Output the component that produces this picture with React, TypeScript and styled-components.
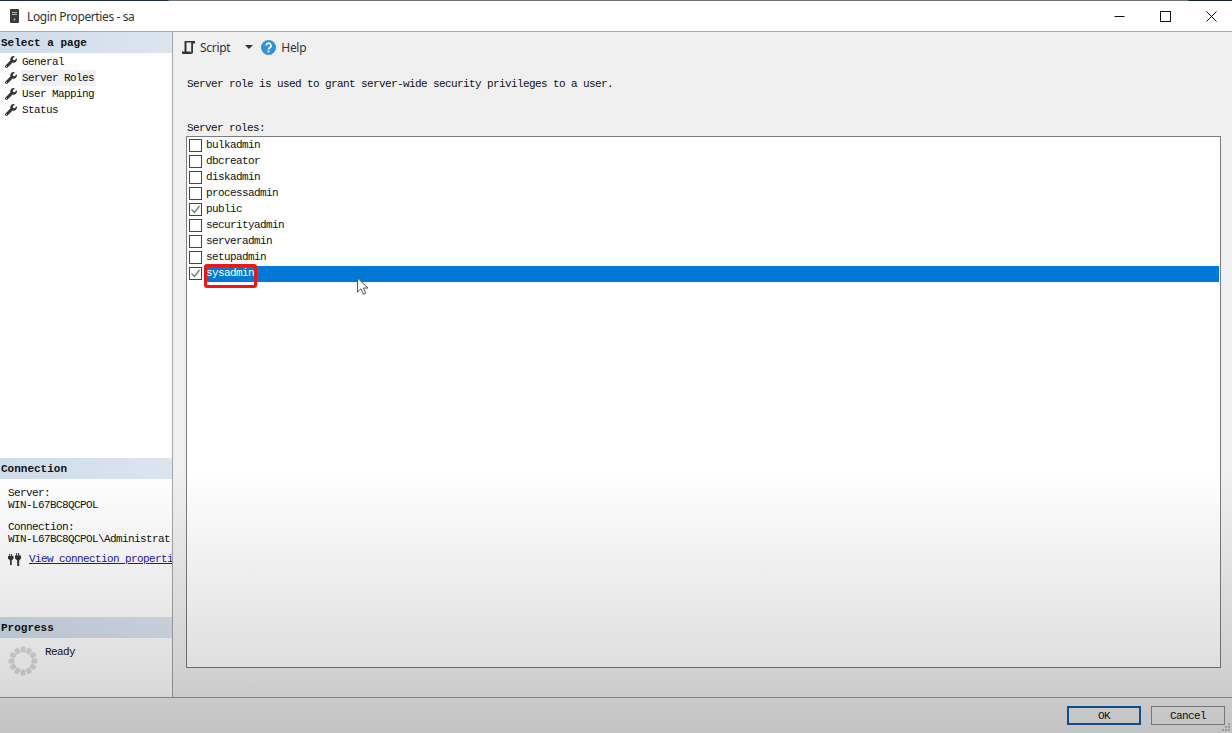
import React from "react";
import styled, { createGlobalStyle } from "styled-components";
import { FaWrench } from "react-icons/fa";

const Global = createGlobalStyle`
  html, body { margin: 0; padding: 0; height: 100%; background: #f0f0f0; overflow: hidden; }
  #root { height: 100%; }
  *, *::before, *::after { box-sizing: border-box; }
`;

const mono = `"Liberation Mono", "DejaVu Sans Mono", monospace`;

const Window = styled.div`
  position: relative;
  width: 1232px;
  height: 733px;
  display: flex;
  flex-direction: column;
  background: #f0f0f0;
  overflow: hidden;
  font-family: ${mono};
  font-size: 11px;
  letter-spacing: -0.6px;
  color: #111;
`;
const TopStrip = styled.div`
  height: 1px;
  flex: none;
  background: linear-gradient(90deg, #1d2a3a 0, #1d2a3a 168px, #6d7378 169px, #6d7378 1188px, #16202c 1189px);
`;
const TitleBar = styled.div`
  height: 31px;
  flex: none;
  display: flex;
  align-items: center;
  background: #fff;
  border-bottom: 1px solid #a9a9a9;
  padding-left: 10px;
  margin-right: -2px;
`;
const TitleText = styled.div`
  font-family: "Noto Sans", "Open Sans", sans-serif;
  font-size: 12px;
  letter-spacing: -0.38px;
  color: #333;
  margin-left: 8px;
  flex: 1;
`;
const WinButton = styled.div`
  width: 46px;
  height: 30px;
  display: flex;
  align-items: center;
  justify-content: center;
`;
const Body = styled.div`
  flex: 1;
  min-height: 0;
  display: flex;
`;
const Sidebar = styled.div`
  width: 173px;
  flex: none;
  display: flex;
  flex-direction: column;
  background: #fff;
  border-right: 1px solid #a5a5a5;
  overflow: hidden;
  white-space: nowrap;
`;
const SectionHead = styled.div`
  height: 21px;
  flex: none;
  display: flex;
  align-items: center;
  font-weight: 700;
  letter-spacing: 0;
  padding-left: 1px;
  background: linear-gradient(90deg, #cfdcea, #dbe5f0);
`;
const PageList = styled.div`
  flex: 1;
  padding-top: 1px;
`;
const PageRow = styled.div`
  height: 16px;
  display: flex;
  align-items: center;
  padding-left: 5px;
  gap: 4px;
  svg { width: 12px; height: 12px; color: #333; flex: none; }
`;
const PageLabel = styled.span<{ $active?: boolean }>`
  padding: 0 2px 0 1px;
  line-height: 16px;
  background: ${(p) => (p.$active ? "#f1f1f1" : "transparent")};
`;
const ConnBody = styled.div`
  height: 138px;
  flex: none;
  display: flex;
  flex-direction: column;
  gap: 10px;
  padding: 8px 0 0 8px;
  line-height: 12px;
`;
const ConnGroup = styled.div``;
const LinkRow = styled.div`
  display: flex;
  align-items: center;
  gap: 8px;
  margin-top: -3px;
  height: 14px;
  svg { flex: none; }
`;
const LinkText = styled.a`
  color: #1a1ab0;
  text-decoration: underline;
`;
const ProgressBody = styled.div`
  height: 59px;
  flex: none;
  display: flex;
  padding: 8px 0 0 8px;
  gap: 7px;
  line-height: 12px;
`;
const Main = styled.div`
  flex: 1;
  min-width: 0;
  display: flex;
  flex-direction: column;
  padding: 0 11px 29px 8px;
  background: #f0f0f0;
`;
const Toolbar = styled.div`
  height: 30px;
  flex: none;
  display: flex;
  align-items: center;
  padding-left: 1px;
  font-family: "Noto Sans", "Open Sans", sans-serif;
  font-size: 12px;
  letter-spacing: -0.3px;
  color: #333;
`;
const ToolLabel = styled.span`
  margin-left: 5px;
`;
const Caret = styled.span`
  width: 0;
  height: 0;
  border-left: 4.5px solid transparent;
  border-right: 4.5px solid transparent;
  border-top: 4.5px solid #333;
  margin: 0 8px 0 15px;
`;
const Description = styled.div`
  margin: 16px 0 0 6px;
  line-height: 12px;
  height: 12px;
`;
const ListTitle = styled.div`
  margin: 32px 0 2px 6px;
  line-height: 12px;
  height: 12px;
`;
const ListBox = styled.div`
  flex: 1;
  margin-left: 5px;
  background: #fff;
  border: 1px solid #7d7d7d;
  padding: 1px 0 0 2px;
  min-height: 0;
`;
const RoleRow = styled.div`
  height: 16px;
  display: flex;
  align-items: center;
  gap: 2px;
  padding-right: 1px;
`;
const Check = styled.span`
  width: 13px;
  height: 13px;
  flex: none;
  margin-top: -1px;
  border: 1px solid #444;
  background: #fff;
  display: flex;
  align-items: center;
  justify-content: center;
`;
const RoleLabel = styled.span<{ $selected?: boolean }>`
  flex: 1;
  height: 16px;
  line-height: 15px;
  padding-left: 2px;
  background: ${(p) => (p.$selected ? "#0078d7" : "transparent")};
  color: ${(p) => (p.$selected ? "#fff" : "#111")};
`;
const Footer = styled.div`
  height: 36px;
  flex: none;
  border-top: 1px solid #9b9b9b;
  background: #f0f0f0;
  display: flex;
  justify-content: flex-end;
  align-items: flex-start;
  gap: 10px;
  padding: 8px 7px 0 0;
`;
const DialogButton = styled.div<{ $primary?: boolean }>`
  width: 74px;
  height: 19px;
  display: flex;
  align-items: center;
  justify-content: center;
  background: #f0f0f0;
  border: ${(p) => (p.$primary ? "2px solid #0f5fa8" : "1px solid #8f8f8f")};
`;
const Fade = styled.div`
  position: absolute;
  left: 0;
  right: 0;
  top: 470px;
  bottom: 0;
  pointer-events: none;
  background: linear-gradient(180deg, rgba(0,0,0,0) 0%, rgba(0,0,0,0.13) 76%, rgba(0,0,0,0.19) 100%);
`;
const RedBox = styled.div`
  position: absolute;
  left: 204px;
  top: 264px;
  width: 53px;
  height: 24px;
  border: 3px solid #f01414;
  border-radius: 3px;
`;
const Pointer = styled.svg`
  position: absolute;
  left: 356px;
  top: 277px;
`;
const Grip = styled.svg`
  position: absolute;
  right: 1px;
  bottom: 1px;
`;

const roles = ["bulkadmin", "dbcreator", "diskadmin", "processadmin", "public", "securityadmin", "serveradmin", "setupadmin", "sysadmin"];
const checked = new Set(["public", "sysadmin"]);
const pages = ["General", "Server Roles", "User Mapping", "Status"];

const Spinner = () => (
  <svg width="30" height="30" viewBox="0 0 30 30">
    {Array.from({ length: 12 }).map((_, i) => (
      <rect key={i} x="12.500" y="0.500" width="5" height="6" rx="1.500" fill="#dcdcdc" transform={`rotate(${i * 30} 15 15)`} />
    ))}
  </svg>
);

export default function App() {
  return (
    <Window>
      <Global />
      <TopStrip />
      <TitleBar>
        <svg width="9" height="14" viewBox="0 0 9 14">
          <rect width="9" height="14" rx="1" fill="#3a3a3a" />
          <rect x="2" y="3" width="5" height="1" fill="#bbb" />
          <rect x="2" y="5" width="5" height="1" fill="#bbb" />
          <circle cx="4.5" cy="10.5" r="1" fill="#bbb" />
        </svg>
        <TitleText>Login Properties - sa</TitleText>
        <WinButton>
          <svg width="11" height="11" viewBox="0 0 11 11"><path d="M0.5 5.5h10" stroke="#111" /></svg>
        </WinButton>
        <WinButton>
          <svg width="11" height="11" viewBox="0 0 11 11"><rect x="0.5" y="0.5" width="10" height="10" fill="none" stroke="#111" /></svg>
        </WinButton>
        <WinButton>
          <svg width="11" height="11" viewBox="0 0 11 11"><path d="M0.5 0.5l10 10M10.5 0.5l-10 10" stroke="#111" /></svg>
        </WinButton>
      </TitleBar>
      <Body>
        <Sidebar>
          <SectionHead>Select a page</SectionHead>
          <PageList>
            {pages.map((p) => (
              <PageRow key={p}>
                <FaWrench />
                <PageLabel $active={p === "Server Roles"}>{p}</PageLabel>
              </PageRow>
            ))}
          </PageList>
          <SectionHead>Connection</SectionHead>
          <ConnBody>
            <ConnGroup>Server:<br />WIN-L67BC8QCPOL</ConnGroup>
            <ConnGroup>Connection:<br />WIN-L67BC8QCPOL\Administrat</ConnGroup>
            <LinkRow>
              <svg width="13" height="13" viewBox="0 0 13 13" fill="#333">
                <path d="M0 3h1.2V1h1v2h1V1h1v2H5.500v2.500L3.700 7.500V12H2V7.500L0 5.500z" />
                <path d="M7 2.500h1.200V0h1v2.500h1V0h1v2.500H13v3L11.200 7.500V13H9.200V7.500L7 5.500z" />
              </svg>
              <LinkText>View connection properties</LinkText>
            </LinkRow>
          </ConnBody>
          <SectionHead>Progress</SectionHead>
          <ProgressBody>
            <Spinner />
            <span>Ready</span>
          </ProgressBody>
        </Sidebar>
        <Main>
          <Toolbar>
            <svg width="13" height="13" viewBox="0 0 13 13" fill="#333">
              <path d="M3 0h10v2.500h-2V10.500a2 2 0 0 1-2 2.500H0.800a1.700 1.700 0 0 1-.8-2.500h2.500V2a2 2 0 0 1 .5-2zM4.500 1.500V10.500H8.500v1H9.200V1.500z" fillRule="evenodd" />
            </svg>
            <ToolLabel>Script</ToolLabel>
            <Caret />
            <svg width="15" height="15" viewBox="0 0 15 15">
              <circle cx="7.500" cy="7.500" r="7.500" fill="#2f93dc" />
              <path d="M5.200 5.600a2.400 2.400 0 1 1 3.600 2.100c-.9.500-1.300 1-1.300 1.800" fill="none" stroke="#fff" strokeWidth="1.700" />
              <rect x="6.600" y="10.600" width="1.800" height="1.800" fill="#fff" />
            </svg>
            <ToolLabel>Help</ToolLabel>
          </Toolbar>
          <Description>Server role is used to grant server-wide security privileges to a user.</Description>
          <ListTitle>Server roles:</ListTitle>
          <ListBox>
            {roles.map((r) => (
              <RoleRow key={r}>
                <Check>
                  {checked.has(r) && (
                    <svg width="11" height="11" viewBox="0 0 11 11">
                      <path d="M1.500 5.500l3 3L9.500 2" fill="none" stroke="#777" strokeWidth="1.300" />
                    </svg>
                  )}
                </Check>
                <RoleLabel $selected={r === "sysadmin"}>{r}</RoleLabel>
              </RoleRow>
            ))}
          </ListBox>
        </Main>
      </Body>
      <Footer>
        <DialogButton $primary>OK</DialogButton>
        <DialogButton>Cancel</DialogButton>
      </Footer>
      <Fade />
      <RedBox />
      <Pointer width="14" height="19" viewBox="0 0 14 19">
        <path d="M1.500 1v14l3.500-3.200 2.400 5.400 2.400-1-2.400-5.200h4.600z" fill="#fff" stroke="#555" strokeWidth="1" />
      </Pointer>
      <Grip width="10" height="10" viewBox="0 0 10 10" fill="#9a9a9a">
        <rect x="7" y="1" width="2" height="2" />
        <rect x="4" y="4" width="2" height="2" />
        <rect x="7" y="4" width="2" height="2" />
        <rect x="1" y="7" width="2" height="2" />
        <rect x="4" y="7" width="2" height="2" />
        <rect x="7" y="7" width="2" height="2" />
      </Grip>
    </Window>
  );
}
